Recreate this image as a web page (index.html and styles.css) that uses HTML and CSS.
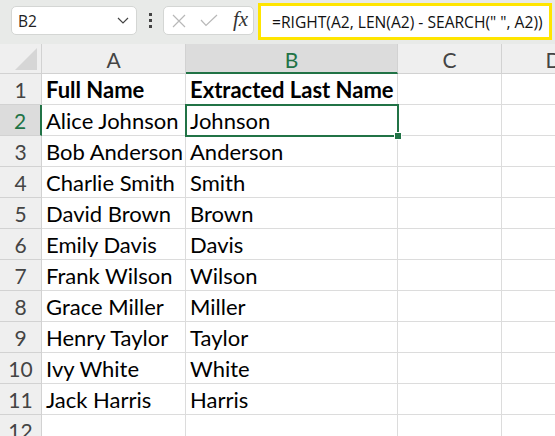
FILE: index.html
```html
<!DOCTYPE html>
<html lang="en">

<head>
    <meta charset="UTF-8">
    <meta name="viewport" content="width=device-width, initial-scale=1.0">
    <title>Extract Last Name</title>
    <link rel="stylesheet" href="styles.css">
</head>

<body>
    <div class="toolbar">
        <div class="name-box">
            <span>B2</span>
            <svg class="chevron" width="12" height="7" viewBox="0 0 12 7">
                <path d="M1 1 L6 6 L11 1" fill="none" stroke="#444" stroke-width="1.2" />
            </svg>
        </div>
        <div class="dots"><i></i><i></i><i></i></div>
        <div class="fx-box">
            <svg width="14" height="14" viewBox="0 0 14 14">
                <path d="M1 1 L13 13 M13 1 L1 13" stroke="#b8b8b8" stroke-width="1.2" />
            </svg>
            <svg width="18" height="13" viewBox="0 0 18 13">
                <path d="M1 6 L6 11.5 L17 1" fill="none" stroke="#b8b8b8" stroke-width="1.2" />
            </svg>
            <span class="fx">fx</span>
        </div>
        <div class="formula">=RIGHT(A2, LEN(A2) - SEARCH(" ", A2))</div>
    </div>

    <div class="sheet">
        <div class="corner"><span class="tri"></span></div>
        <div class="col-head">A</div>
        <div class="col-head active">B</div>
        <div class="col-head">C</div>
        <div class="col-head">D</div>

        <div class="row-head">1</div>
        <div class="cell bold">Full Name</div>
        <div class="cell bold">Extracted Last Name</div>
        <div class="cell"></div>
        <div class="cell"></div>

        <div class="row-head active">2</div>
        <div class="cell">Alice Johnson</div>
        <div class="cell selected">Johnson<span class="handle"></span></div>
        <div class="cell"></div>
        <div class="cell"></div>

        <div class="row-head">3</div>
        <div class="cell">Bob Anderson</div>
        <div class="cell">Anderson</div>
        <div class="cell"></div>
        <div class="cell"></div>

        <div class="row-head">4</div>
        <div class="cell">Charlie Smith</div>
        <div class="cell">Smith</div>
        <div class="cell"></div>
        <div class="cell"></div>

        <div class="row-head">5</div>
        <div class="cell">David Brown</div>
        <div class="cell">Brown</div>
        <div class="cell"></div>
        <div class="cell"></div>

        <div class="row-head">6</div>
        <div class="cell">Emily Davis</div>
        <div class="cell">Davis</div>
        <div class="cell"></div>
        <div class="cell"></div>

        <div class="row-head">7</div>
        <div class="cell">Frank Wilson</div>
        <div class="cell">Wilson</div>
        <div class="cell"></div>
        <div class="cell"></div>

        <div class="row-head">8</div>
        <div class="cell">Grace Miller</div>
        <div class="cell">Miller</div>
        <div class="cell"></div>
        <div class="cell"></div>

        <div class="row-head">9</div>
        <div class="cell">Henry Taylor</div>
        <div class="cell">Taylor</div>
        <div class="cell"></div>
        <div class="cell"></div>

        <div class="row-head">10</div>
        <div class="cell">Ivy White</div>
        <div class="cell">White</div>
        <div class="cell"></div>
        <div class="cell"></div>

        <div class="row-head">11</div>
        <div class="cell">Jack Harris</div>
        <div class="cell">Harris</div>
        <div class="cell"></div>
        <div class="cell"></div>

        <div class="row-head">12</div>
        <div class="cell"></div>
        <div class="cell"></div>
        <div class="cell"></div>
        <div class="cell"></div>
    </div>
</body>

</html>
```

FILE: styles.css
```css
* {
    box-sizing: border-box;
}

body {
    margin: 0;
    padding: 0;
    width: 555px;
    height: 436px;
    overflow: hidden;
    background-color: #ffffff;
    font-family: "Lato", sans-serif;
}

/* barra de fórmulas */
.toolbar {
    height: 44px;
    background-color: #e8eae8;
    display: flex;
    align-items: flex-start;
    padding: 3px 0 0 11px;
}

.name-box {
    width: 126px;
    height: 29px;
    margin-top: 3px;
    background-color: #fff;
    border: 1px solid #d4d6d4;
    border-radius: 5px;
    display: flex;
    align-items: center;
    justify-content: space-between;
    padding: 0 7px 0 6px;
    font-family: "Open Sans", sans-serif;
    font-size: 15.5px;
    color: #222;
}

.dots {
    width: 26px;
    height: 35px;
    display: flex;
    flex-direction: column;
    align-items: center;
    justify-content: center;
    gap: 3px;
}

.dots i {
    width: 3px;
    height: 3px;
    background-color: #444;
}

.fx-box {
    width: 91px;
    height: 29px;
    margin-top: 3px;
    background-color: #fff;
    border: 1px solid #d4d6d4;
    border-radius: 5px;
    display: flex;
    align-items: center;
    padding: 0 0 0 8px;
    gap: 14px;
}

.fx {
    font-family: "Liberation Serif", serif;
    font-style: italic;
    font-size: 21px;
    color: #333;
    margin-top: -3px;
    margin-left: 1px;
}

.formula {
    flex: 1;
    height: 37px;
    margin: 0 3px 0 4px;
    background-color: #fff;
    border: 3px solid #ffe500;
    display: flex;
    align-items: center;
    padding-left: 11px;
    font-family: "Open Sans", sans-serif;
    font-size: 15.6px;
    color: #111;
    white-space: nowrap;
    overflow: hidden;
}

/* grade da planilha */
.sheet {
    display: grid;
    width: 606px;
    grid-template-columns: 42px 144px 212px 104px 104px;
    grid-template-rows: 30px repeat(12, 31px);
}

.corner {
    background-color: #efefef;
    border-right: 1px solid #d2d2d2;
    border-bottom: 1px solid #d2d2d2;
    position: relative;
}

.tri {
    position: absolute;
    right: 4px;
    bottom: 3px;
    width: 22px;
    height: 22px;
    background-color: #d6d6d6;
    clip-path: polygon(100% 0, 100% 100%, 0 100%);
}

.col-head {
    background-color: #efefef;
    border-right: 1px solid #d2d2d2;
    border-bottom: 1px solid #d2d2d2;
    display: flex;
    align-items: center;
    justify-content: center;
    font-size: 21px;
    color: #444;
    padding-top: 2px;
}

.col-head.active {
    background-color: #dcdcdc;
    color: #217346;
    border-bottom: 2px solid #217346;
}

.row-head {
    background-color: #efefef;
    border-right: 1px solid #d2d2d2;
    border-bottom: 1px solid #d2d2d2;
    display: flex;
    align-items: center;
    justify-content: center;
    font-size: 21px;
    color: #444;
    padding-top: 1px;
}

.row-head.active {
    background-color: #dcdcdc;
    color: #217346;
    border-right: 2px solid #217346;
}

.cell {
    border-right: 1px solid #dcdcdc;
    border-bottom: 1px solid #dcdcdc;
    display: flex;
    align-items: center;
    padding: 1px 0 0 4px;
    font-size: 22px;
    color: #000;
    white-space: nowrap;
    position: relative;
}

.cell.bold {
    font-weight: bold;
}

.cell.selected {
    outline: 2px solid #217346;
    outline-offset: -1px;
    z-index: 2;
}

.handle {
    position: absolute;
    right: -4px;
    bottom: -4px;
    width: 6px;
    height: 6px;
    background-color: #217346;
    box-shadow: 0 0 0 1px #fff;
}
```
